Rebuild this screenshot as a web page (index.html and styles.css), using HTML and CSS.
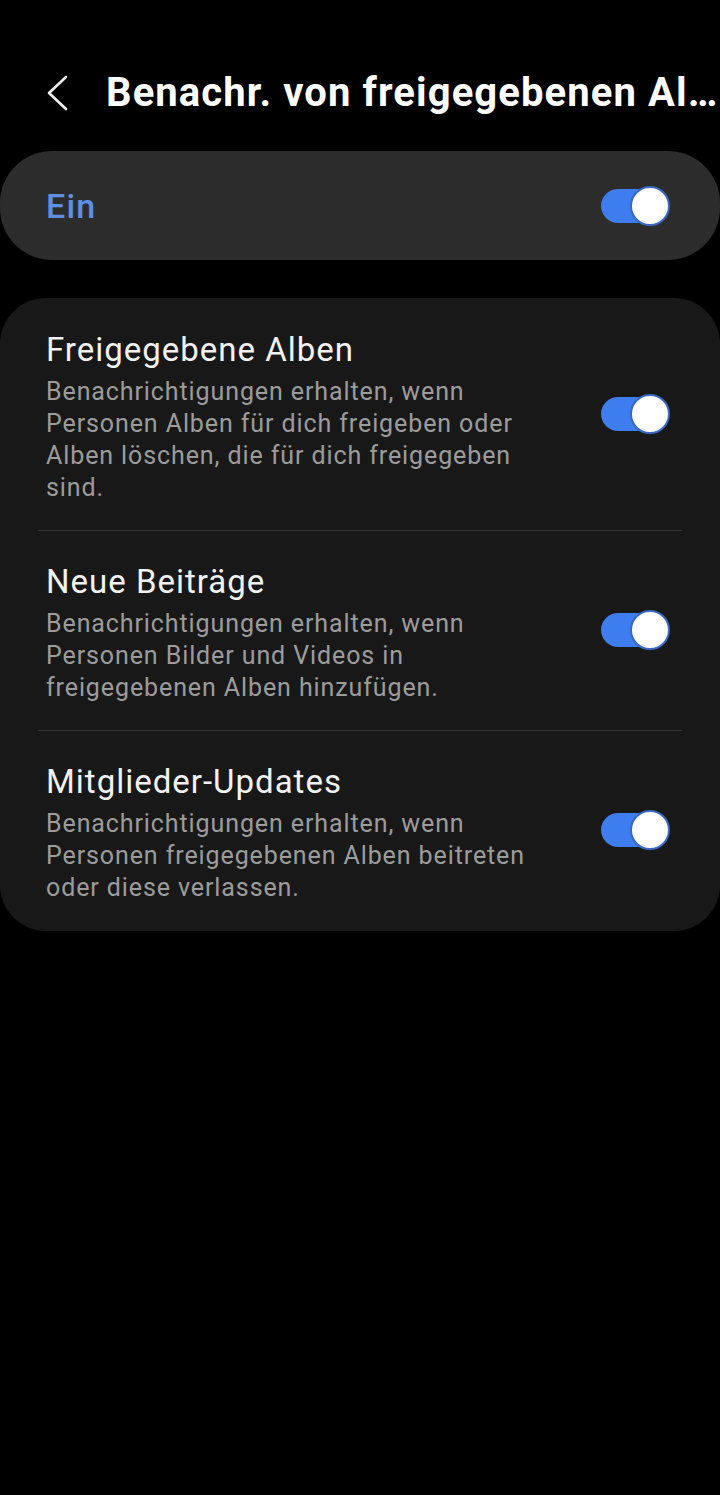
FILE: index.html
```html
<!DOCTYPE html>
<html lang="de">
<head>
<meta charset="utf-8">
<title>Benachrichtigungen</title>
<link rel="stylesheet" href="styles.css">
</head>
<body>
<div class="screen">
  <header class="appbar">
    <svg class="back" width="30" height="40" viewBox="0 0 30 40" aria-hidden="true">
      <polyline points="20,4 3,20 20,36" fill="none" stroke="#eeeeee" stroke-width="2.6" stroke-linecap="round" stroke-linejoin="round"/>
    </svg>
    <h1 class="title">Benachr. von freigegebenen Al…</h1>
  </header>

  <section class="master">
    <span class="master-label">Ein</span>
    <span class="switch"><span class="track"></span><span class="thumb"></span></span>
  </section>

  <section class="list">
    <div class="item">
      <div class="text">
        <div class="item-title">Freigegebene Alben</div>
        <div class="item-sub">Benachrichtigungen erhalten, wenn Personen Alben für dich freigeben oder Alben löschen, die für dich freigegeben sind.</div>
      </div>
      <span class="switch"><span class="track"></span><span class="thumb"></span></span>
    </div>
    <div class="divider"></div>
    <div class="item">
      <div class="text">
        <div class="item-title">Neue Beiträge</div>
        <div class="item-sub">Benachrichtigungen erhalten, wenn Personen Bilder und Videos in freigegebenen Alben hinzufügen.</div>
      </div>
      <span class="switch"><span class="track"></span><span class="thumb"></span></span>
    </div>
    <div class="divider"></div>
    <div class="item">
      <div class="text">
        <div class="item-title">Mitglieder-Updates</div>
        <div class="item-sub">Benachrichtigungen erhalten, wenn Personen freigegebenen Alben beitreten oder diese verlassen.</div>
      </div>
      <span class="switch"><span class="track"></span><span class="thumb"></span></span>
    </div>
  </section>
</div>
</body>
</html>
```

FILE: styles.css
```css
html, body {
  margin: 0;
  padding: 0;
  background: #000;
}
body {
  font-family: Roboto, "Noto Sans", "Liberation Sans", sans-serif;
  color: #f2f2f2;
  width: 720px;
  height: 1495px;
  overflow: hidden;
}
.screen {
  display: flex;
  flex-direction: column;
}
.appbar {
  display: flex;
  align-items: center;
  height: 66px;
  margin-top: 60px;
  padding-left: 46px;
}
.back {
  flex: none;
  width: 30px;
  height: 40px;
  margin-right: 30px;
}
.title {
  margin: 0;
  font-size: 40px;
  font-weight: 700;
  line-height: 48px;
  color: #ffffff;
  white-space: nowrap;
  overflow: hidden;
  letter-spacing: 1.1px;
}
.master {
  margin-top: 25px;
  height: 109px;
  background: #2c2c2c;
  border-radius: 52px;
  display: flex;
  align-items: center;
  justify-content: space-between;
  padding: 0 50px 0 46px;
}
.master-label {
  font-size: 34px;
  font-weight: 500;
  color: #5f8fe2;
  line-height: 40px;
  letter-spacing: 1.2px;
}
.list {
  margin-top: 38px;
  background: #181818;
  border-radius: 46px;
  padding: 1px 0 1px;
}
.item {
  display: flex;
  align-items: center;
  justify-content: space-between;
  padding: 31px 50px 26px 46px;
}
.item .switch {
  margin-bottom: 6px;
}
.text {
  width: 486px;
}
.item-title {
  font-size: 33px;
  line-height: 40px;
  color: #f2f2f2;
  margin-bottom: 6px;
  letter-spacing: 1px;
}
.item-sub {
  font-size: 25px;
  line-height: 32px;
  color: #9c9c9c;
  letter-spacing: 0.9px;
}
.divider {
  height: 1px;
  background: #333333;
  margin: 0 38px;
}
.switch {
  position: relative;
  flex: none;
  width: 69px;
  height: 40px;
}
.track {
  position: absolute;
  left: 0;
  top: 3px;
  width: 56px;
  height: 34px;
  border-radius: 17px;
  background: #3e7ded;
}
.thumb {
  position: absolute;
  right: 0;
  top: 0;
  width: 36px;
  height: 36px;
  border-radius: 50%;
  background: #ffffff;
  border: 2px solid #3a68c0;
}
```
